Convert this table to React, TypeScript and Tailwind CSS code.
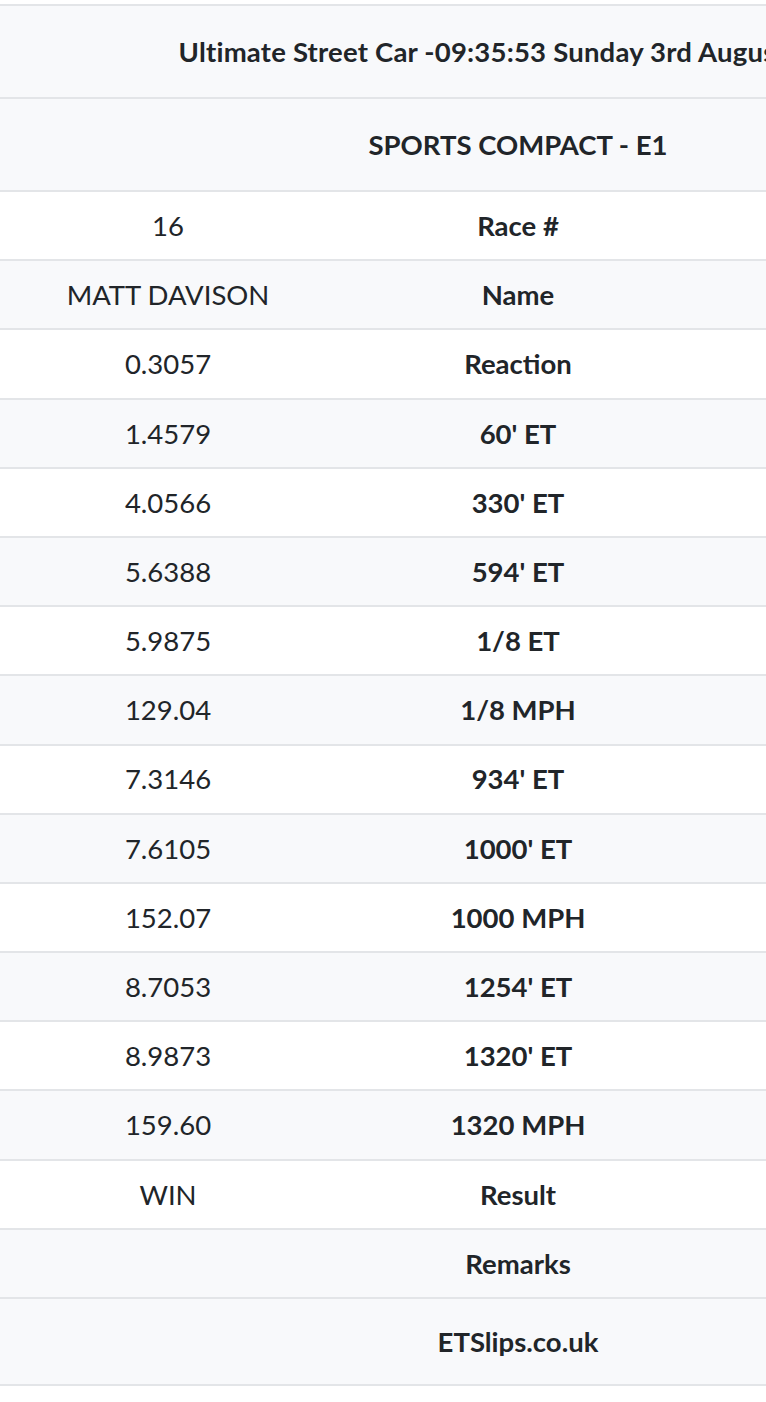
const rows = [
  { left: "16", label: "Race #" },
  { left: "MATT DAVISON", label: "Name" },
  { left: "0.3057", label: "Reaction" },
  { left: "1.4579", label: "60' ET" },
  { left: "4.0566", label: "330' ET" },
  { left: "5.6388", label: "594' ET" },
  { left: "5.9875", label: "1/8 ET" },
  { left: "129.04", label: "1/8 MPH" },
  { left: "7.3146", label: "934' ET" },
  { left: "7.6105", label: "1000' ET" },
  { left: "152.07", label: "1000 MPH" },
  { left: "8.7053", label: "1254' ET" },
  { left: "8.9873", label: "1320' ET" },
  { left: "159.60", label: "1320 MPH" },
  { left: "WIN", label: "Result" },
  { left: "", label: "Remarks" },
];

const App = () => {
  return (
    <div className="w-full min-h-[1402px] overflow-hidden bg-white text-[#212529] font-['Lato',sans-serif] text-[27.5px]">
      <div className="w-[1036px] pt-1">
        {/* header rows */}
        <div className="h-[93px] border-t-2 border-[#e3e5e8] bg-[#f8f9fb] flex items-center justify-center font-bold tracking-[0.2px]">
          Ultimate Street Car -09:35:53 Sunday 3rd August 2025
        </div>
        <div className="h-[93px] border-t-2 border-[#e3e5e8] bg-[#f8f9fb] flex items-center justify-center font-bold">
          SPORTS COMPACT - E1
        </div>

        {/* slip rows */}
        {rows.map((row, i) => (
          <div
            key={row.label}
            className={`h-[69.2px] border-t-2 border-[#e3e5e8] flex items-center ${i % 2 === 1 ? "bg-[#f8f9fb]" : "bg-white"}`}
          >
            <div className="w-[336px] text-center">{row.left}</div>
            <div className="w-[364px] text-center font-bold">{row.label}</div>
            <div className="w-[336px] text-center"></div>
          </div>
        ))}

        {/* footer */}
        <div className="h-[89px] border-t-2 border-b-2 border-[#e3e5e8] bg-[#f8f9fb] flex items-center">
          <div className="w-[336px]"></div>
          <div className="w-[364px] text-center font-bold">ETSlips.co.uk</div>
          <div className="w-[336px]"></div>
        </div>
      </div>
    </div>
  );
};

export default App;
